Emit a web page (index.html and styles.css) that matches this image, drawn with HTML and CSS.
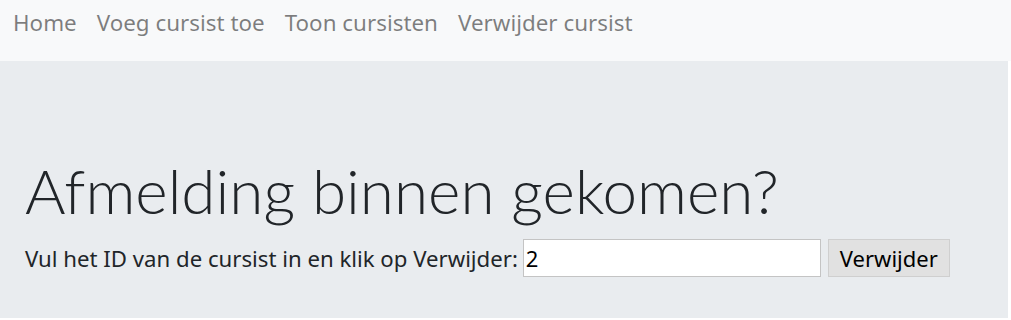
FILE: index.html
```html
<!DOCTYPE html>
<html>
<head>
    <title>Verwijder cursist</title>
    <link rel="stylesheet" href="styles.css">
</head>
<body>
    <nav class="navbar">
        <a class="nav-link" href="#">Home</a>
        <a class="nav-link" href="#">Voeg cursist toe</a>
        <a class="nav-link" href="#">Toon cursisten</a>
        <a class="nav-link" href="#">Verwijder cursist</a>
    </nav>

    <div class="jumbotron">
        <h1 class="display-4">Afmelding binnen gekomen?</h1>
        <form class="delete-form">
            <label for="cursistId">Vul het ID van de cursist in en klik op Verwijder:</label>
            <input type="text" id="cursistId" value="2">
            <button type="submit" class="delete-btn">Verwijder</button>
        </form>
    </div>
</body>
</html>
```

FILE: styles.css
```css
body {
    font-family: "Noto Sans", "Open Sans", sans-serif;
    margin: 0;
    color: #212529;
    background-color: white;
    font-size: 22.2px;
}

.navbar {
    display: flex;
    align-items: flex-start;
    height: 61px;
    padding: 7px 3px 0;
    box-sizing: border-box;
    background-color: #f8f9fa;
}

.nav-link {
    color: rgba(0,0,0,0.5);
    text-decoration: none;
    padding: 0 10px;
    font-size: 22.4px;
}

.jumbotron {
    background-color: #e9ecef;
    padding: 98px 25px 40px;
    margin-right: 3px;
    height: 119px;
}

.display-4 {
    font-family: Lato, "Noto Sans", sans-serif;
    font-size: 62px;
    font-weight: 300;
    line-height: 1;
    margin: 0 0 18px;
}

.delete-form {
    display: flex;
    align-items: center;
}

label {
    margin-right: 5px;
}

input {
    width: 292px;
    height: 32px;
    padding: 2px 2px;
    border: 1px solid #c4c4c4;
    font-family: inherit;
    font-size: 22px;
    color: black;
}

.delete-btn {
    margin-left: 7px;
    height: 38px;
    padding: 0 11px;
    background-color: #e1e1e1;
    border: 1px solid #cfcfcf;
    font-family: inherit;
    font-size: 22px;
    color: black;
}
```
